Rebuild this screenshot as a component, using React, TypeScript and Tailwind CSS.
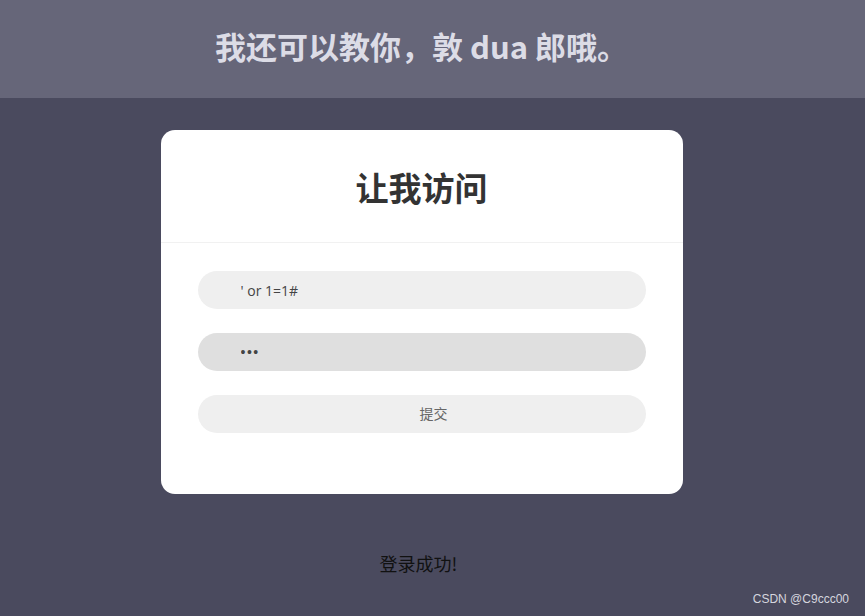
import React from 'react';

const cjk = '"Noto Sans CJK SC", "Open Sans", sans-serif';

const App = () => {
  return (
    <div className="relative min-h-[616px] bg-[#4a4a5e] flex flex-col items-center" style={{ fontFamily: cjk }}>
      <div className="w-full h-[98px] bg-[#666679] flex items-center justify-center">
        <h1 className="text-[31px] font-bold text-[#dcdce6] pr-[22px] pb-[6px]">
          我还可以教你，敦 dua 郎哦。
        </h1>
      </div>

      <div className="mt-[32px] mr-[22px] w-[522px] bg-white rounded-[14px] pb-[61px]">
        <div className="h-[113px] flex items-center justify-center border-b border-[#f1f1f1]">
          <h2 className="text-[33px] font-bold text-[#333] pt-[4px]">让我访问</h2>
        </div>
        <div className="px-[37px] pt-[28px] flex flex-col gap-[24px]">
          <input
            className="h-[38px] w-full rounded-full bg-[#efefef] pl-[43px] text-[14px] text-[#444] outline-none"
            style={{ fontFamily: '"Open Sans", sans-serif' }}
            defaultValue="' or 1=1#"
          />
          <input
            className="h-[38px] w-full rounded-full bg-[#dfdfdf] pl-[43px] text-[14px] text-[#444] outline-none tracking-[1.5px]"
            style={{ fontFamily: '"Liberation Sans", sans-serif' }}
            defaultValue="•••"
          />
          <button className="h-[38px] w-full rounded-full bg-[#efefef] text-[14px] text-[#666] pl-[24px] pb-[2px]">
            提交
          </button>
        </div>
      </div>

      <p className="mt-[56px] mr-[28px] text-[18px] text-[#111]">登录成功!</p>

      <span className="absolute right-[16px] bottom-[8px] text-[12px] text-[#d6d6de]" style={{ fontFamily: '"Liberation Sans", sans-serif' }}>
        CSDN @C9ccc00
      </span>
    </div>
  );
};

export default App;
